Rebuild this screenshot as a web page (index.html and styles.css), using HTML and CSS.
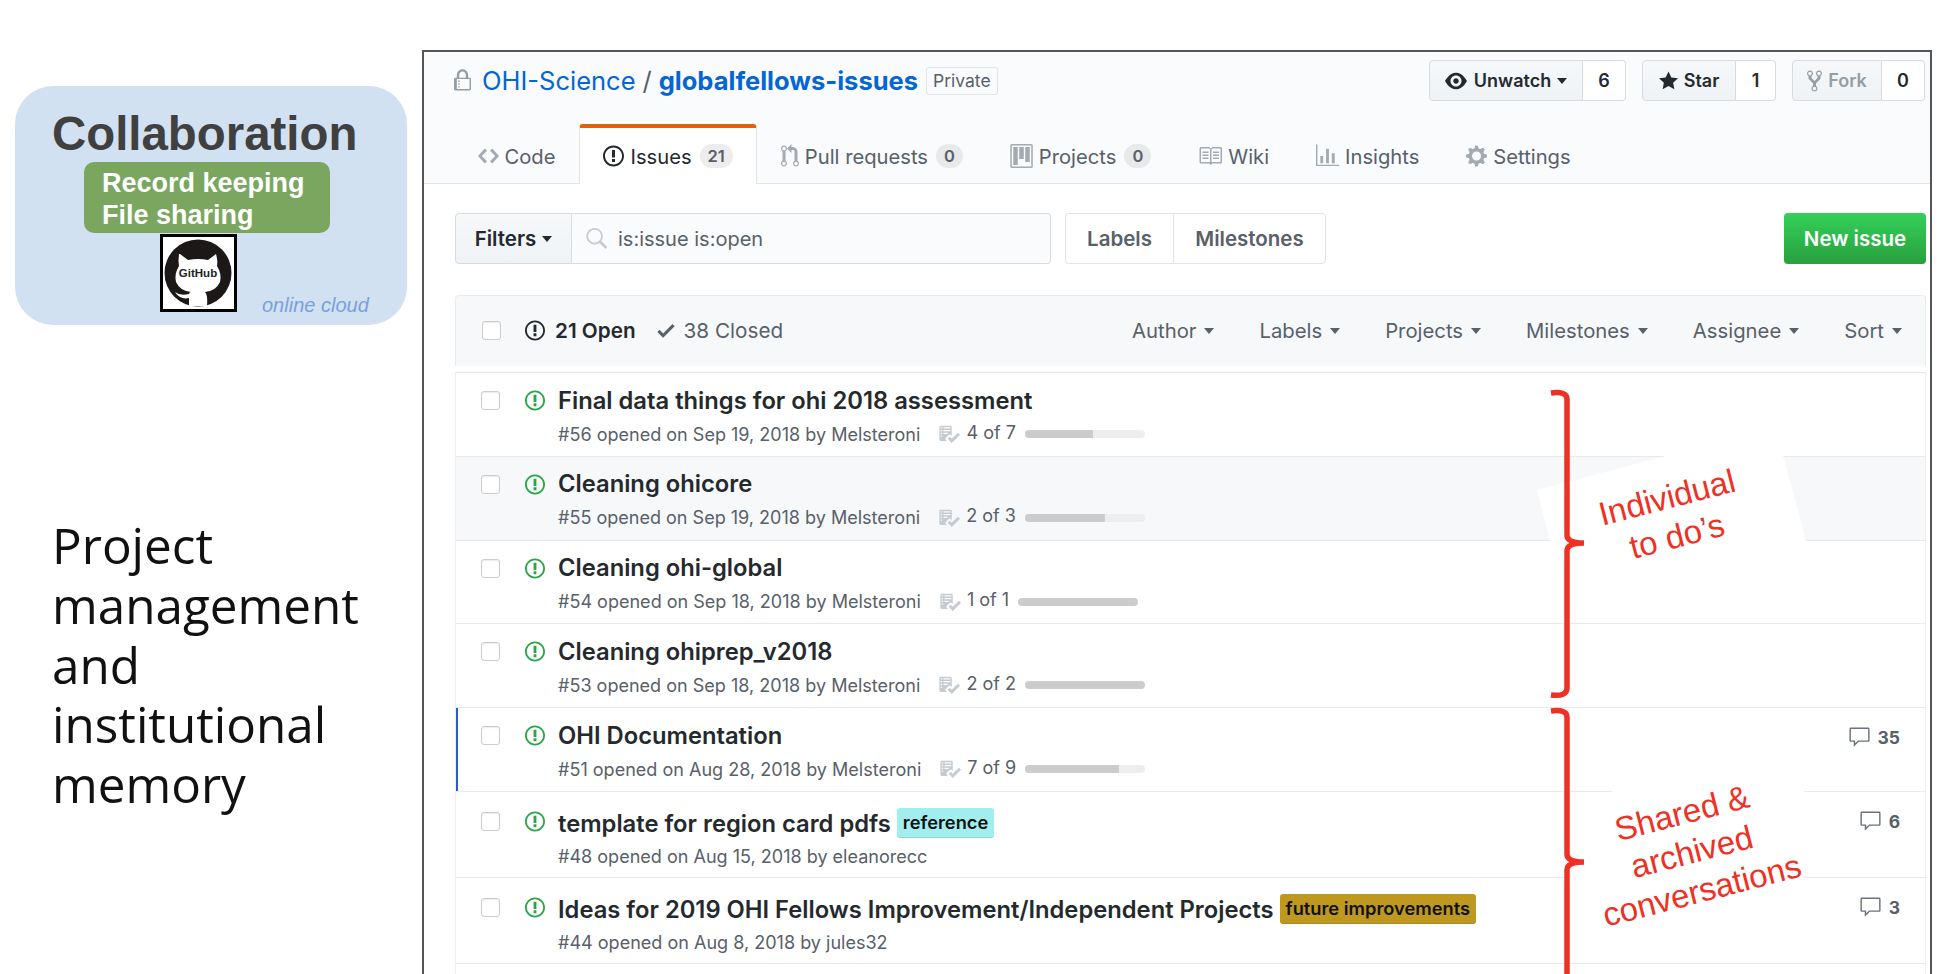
FILE: index.html
```html
<!DOCTYPE html>
<html lang="en">

<head>
  <meta charset="UTF-8">
  <title>Project management and institutional memory</title>
  <link rel="stylesheet" href="styles.css">
</head>

<body>
  <svg class="sprite" width="0" height="0">
    <symbol id="i-issue" viewBox="0 0 14 16"><path d="M7 2.3c3.14 0 5.7 2.56 5.7 5.7s-2.56 5.7-5.7 5.7A5.71 5.71 0 011.3 8c0-3.14 2.56-5.7 5.7-5.7zM7 1C3.14 1 0 4.14 0 8s3.14 7 7 7 7-3.14 7-7-3.14-7-7-7zm1 3H6v5h2V4zm0 6H6v2h2v-2z"/></symbol>
    <symbol id="i-lock" viewBox="0 0 12 16"><path d="M4 13H3v-1h1v1zm8-6v7c0 .55-.45 1-1 1H1c-.55 0-1-.45-1-1V7c0-.55.45-1 1-1h1V4c0-2.2 1.8-4 4-4s4 1.8 4 4v2h1c.55 0 1 .45 1 1zM3.7 6h4.59V4c0-1.27-1.03-2.3-2.3-2.3-1.27 0-2.3 1.03-2.3 2.3v2H3.7zM11 7H2v7h9V7zM4 8H3v1h1V8zm0 2H3v1h1v-1z"/></symbol>
    <symbol id="i-code" viewBox="0 0 14 16"><path d="M9.5 3L8 4.5 11.5 8 8 11.5 9.5 13 14 8 9.5 3zm-5 0L0 8l4.5 5L6 11.5 2.5 8 6 4.5 4.5 3z"/></symbol>
    <symbol id="i-pr" viewBox="0 0 12 16"><path d="M11 11.28V5c-.03-.78-.34-1.47-.94-2.06C9.46 2.35 8.78 2.03 8 2H7V0L4 3l3 3V4h1c.27.02.48.11.69.31.21.2.3.42.31.69v6.28A1.993 1.993 0 0010 15a1.993 1.993 0 001-3.72zm-1 2.92c-.66 0-1.2-.55-1.2-1.2 0-.65.55-1.2 1.2-1.2.65 0 1.2.55 1.2 1.2 0 .65-.55 1.2-1.2 1.2zM4 3c0-1.11-.89-2-2-2a1.993 1.993 0 00-1 3.72v6.56A1.993 1.993 0 002 15a1.993 1.993 0 001-3.72V4.72c.59-.34 1-.98 1-1.72zm-.8 10c0 .66-.55 1.2-1.2 1.2-.65 0-1.2-.55-1.2-1.2 0-.65.55-1.2 1.2-1.2.65 0 1.2.55 1.2 1.2zM2 4.2C1.34 4.2.8 3.65.8 3c0-.65.55-1.2 1.2-1.2.65 0 1.2.55 1.2 1.2 0 .65-.55 1.2-1.2 1.2z"/></symbol>
    <symbol id="i-project" viewBox="0 0 15 16"><path fill-rule="evenodd" d="M10 12h3V2h-3v10zm-4-2h3V2H6v8zm-4 4h3V2H2v12zM14 0H1a1 1 0 00-1 1v14a1 1 0 001 1h13a1 1 0 001-1V1a1 1 0 00-1-1zm0 15H1V1h13v14z"/></symbol>
    <symbol id="i-book" viewBox="0 0 16 16"><path d="M3 5h4v1H3V5zm0 3h4V7H3v1zm0 2h4V9H3v1zm11-5h-4v1h4V5zm0 2h-4v1h4V7zm0 2h-4v1h4V9zm2-6v9c0 .55-.45 1-1 1H9.5l-1 1-1-1H2c-.55 0-1-.45-1-1V3c0-.55.45-1 1-1h5.5l1 1 1-1H15c.55 0 1 .45 1 1zm-8 .5L7.5 3H2v9h6V3.5zm7-.5H9.5l-.5.5V12h6V3z"/></symbol>
    <symbol id="i-graph" viewBox="0 0 16 16"><path d="M16 14v1H0V0h1v14h15zM5 13H3V8h2v5zm4 0H7V3h2v10zm4 0h-2V6h2v7z"/></symbol>
    <symbol id="i-gear" viewBox="0 0 14 16"><path d="M14 8.77v-1.6l-1.94-.64-.45-1.09.88-1.84-1.13-1.13-1.81.91-1.09-.45-.69-1.92h-1.6l-.63 1.94-1.11.45-1.84-.88-1.13 1.13.91 1.81-.45 1.09L0 7.23v1.59l1.94.64.45 1.09-.88 1.84 1.13 1.13 1.81-.91 1.09.45.69 1.92h1.59l.63-1.94 1.11-.45 1.84.88 1.13-1.13-.92-1.81.47-1.09L14 8.75v.02zM7 11c-1.66 0-3-1.34-3-3s1.34-3 3-3 3 1.34 3 3-1.34 3-3 3z"/></symbol>
    <symbol id="i-eye" viewBox="0 0 16 16"><path d="M8.06 2C3 2 0 8 0 8s3 6 8.06 6C13 14 16 8 16 8s-3-6-7.94-6zM8 12c-2.2 0-4-1.78-4-4 0-2.2 1.8-4 4-4 2.22 0 4 1.8 4 4 0 2.22-1.78 4-4 4zm2-4c0 1.11-.89 2-2 2-1.11 0-2-.89-2-2 0-1.11.89-2 2-2 1.11 0 2 .89 2 2z"/></symbol>
    <symbol id="i-star" viewBox="0 0 14 16"><path d="M14 6l-4.9-.64L7 1 4.9 5.36 0 6l3.6 3.26L2.67 14 7 11.67 11.33 14l-.93-4.74L14 6z"/></symbol>
    <symbol id="i-fork" viewBox="0 0 10 16"><path d="M8 1a1.993 1.993 0 00-1 3.72V6L5 8 3 6V4.72A1.993 1.993 0 002 1a1.993 1.993 0 00-1 3.72V6.5l3 3v1.78A1.993 1.993 0 005 15a1.993 1.993 0 001-3.72V9.5l3-3V4.72A1.993 1.993 0 008 1zM2 4.2C1.34 4.2.8 3.65.8 3c0-.65.55-1.2 1.2-1.2.65 0 1.2.55 1.2 1.2 0 .65-.55 1.2-1.2 1.2zm3 10c-.66 0-1.2-.55-1.2-1.2 0-.65.55-1.2 1.2-1.2.65 0 1.2.55 1.2 1.2 0 .65-.55 1.2-1.2 1.2zm3-10c-.66 0-1.2-.55-1.2-1.2 0-.65.55-1.2 1.2-1.2.65 0 1.2.55 1.2 1.2 0 .65-.55 1.2-1.2 1.2z"/></symbol>
    <symbol id="i-search" viewBox="0 0 16 16"><path d="M15.7 13.3l-3.81-3.83A5.93 5.93 0 0013 6c0-3.31-2.69-6-6-6S1 2.69 1 6s2.69 6 6 6c1.3 0 2.48-.41 3.47-1.11l3.83 3.81c.19.2.45.3.7.3.25 0 .52-.09.7-.3a.996.996 0 000-1.41v.01zM7 10.7c-2.59 0-4.7-2.11-4.7-4.7 0-2.59 2.11-4.7 4.7-4.7 2.59 0 4.7 2.11 4.7 4.7 0 2.59-2.11 4.7-4.7 4.7z"/></symbol>
    <symbol id="i-check" viewBox="0 0 12 16"><path d="M12 5l-8 8-4-4 1.5-1.5L4 10l6.5-6.5L12 5z"/></symbol>
    <symbol id="i-checklist" viewBox="0 0 16 16"><path d="M16 8.5l-6 6-3-3L8.5 10l1.5 1.5L14.5 7 16 8.5zM5.7 12.2l.8.8H2c-.55 0-1-.45-1-1V3c0-.55.45-1 1-1h7c.55 0 1 .45 1 1v6.5l-.8-.8c-.39-.39-1.03-.39-1.42 0L5.7 10.8a.996.996 0 000 1.41v-.01zM4 4h5V3H4v1zm0 2h5V5H4v1zm0 2h3V7H4v1zM3 9H2v1h1V9zm0-2H2v1h1V7zm0-2H2v1h1V5zm0-2H2v1h1V3z"/></symbol>
    <symbol id="i-comment" viewBox="0 0 16 16"><path d="M14 1H2c-.55 0-1 .45-1 1v8c0 .55.45 1 1 1h2v3.5L7.5 11H14c.55 0 1-.45 1-1V2c0-.55-.45-1-1-1zm0 9H7l-2 2v-2H2V2h12v8z"/></symbol>
  </svg>

  <div class="slide">
    <aside class="side">
      <section class="cloud">
        <h2 class="cloud-title">Collaboration</h2>
        <div class="cloud-green">Record keeping<br>File sharing</div>
        <div class="cloud-foot">
          <svg class="gh-logo" viewBox="0 0 77 78">
            <rect x="1.5" y="1.5" width="74" height="75" fill="#fff" stroke="#000" stroke-width="3"/>
            <circle cx="38" cy="39" r="33.5" fill="#1b1817"/>
            <path fill="#fff" d="M20 20l8 6q10-2 20 0l8-6q2 7 1 12 5 8 3 16-4 9-15 10 3 3 2 14l-18 0v-8q-9 2-14-6 5 4 14 2 0-2 2-2-11-1-15-10-2-8 3-16-1-5 0-12z"/>
            <text x="38" y="43" class="gh-text" text-anchor="middle">GitHub</text>
          </svg>
          <span class="cloud-note">online cloud</span>
        </div>
      </section>
      <p class="side-text">Project<br>management<br>and<br>institutional<br>memory</p>
    </aside>

    <main class="frame">
      <header class="repo-head">
        <div class="repo-top">
          <h1 class="repo-title">
            <svg class="ico lock"><use href="#i-lock"/></svg>
            <a class="owner">OHI-Science</a>
            <span class="sep">/</span>
            <a class="repo">globalfellows-issues</a>
            <span class="private">Private</span>
          </h1>
          <div class="repo-actions">
            <div class="btn-group watch">
              <span class="btn"><svg class="ico eye"><use href="#i-eye"/></svg>Unwatch<i class="caret"></i></span>
              <span class="count">6</span>
            </div>
            <div class="btn-group star">
              <span class="btn"><svg class="ico star-ico"><use href="#i-star"/></svg>Star</span>
              <span class="count">1</span>
            </div>
            <div class="btn-group fork">
              <span class="btn disabled"><svg class="ico fork-ico"><use href="#i-fork"/></svg>Fork</span>
              <span class="count">0</span>
            </div>
          </div>
        </div>
        <nav class="tabs">
          <a class="tab"><svg class="ico tab-ico code"><use href="#i-code"/></svg>Code</a>
          <a class="tab selected"><svg class="ico tab-ico issue"><use href="#i-issue"/></svg>Issues<span class="counter">21</span></a>
          <a class="tab"><svg class="ico tab-ico pr"><use href="#i-pr"/></svg>Pull requests<span class="counter">0</span></a>
          <a class="tab"><svg class="ico tab-ico project"><use href="#i-project"/></svg>Projects<span class="counter">0</span></a>
          <a class="tab"><svg class="ico tab-ico book"><use href="#i-book"/></svg>Wiki</a>
          <a class="tab"><svg class="ico tab-ico graph"><use href="#i-graph"/></svg>Insights</a>
          <a class="tab"><svg class="ico tab-ico gear"><use href="#i-gear"/></svg>Settings</a>
        </nav>
      </header>

      <div class="issues">
        <div class="toolbar">
          <div class="search-wrap">
            <span class="filters">Filters<i class="caret"></i></span>
            <span class="search"><svg class="ico search-ico"><use href="#i-search"/></svg>is:issue is:open</span>
          </div>
          <div class="nav-links">
            <a class="nav-link labels">Labels</a>
            <a class="nav-link">Milestones</a>
          </div>
          <a class="new-issue">New issue</a>
        </div>

        <div class="list-head">
          <span class="check"></span>
          <span class="state open"><svg class="ico state-ico"><use href="#i-issue"/></svg>21 Open</span>
          <span class="state closed"><svg class="ico check-ico"><use href="#i-check"/></svg>38 Closed</span>
          <div class="list-filters">
            <span>Author<i class="caret"></i></span>
            <span>Labels<i class="caret"></i></span>
            <span>Projects<i class="caret"></i></span>
            <span>Milestones<i class="caret"></i></span>
            <span>Assignee<i class="caret"></i></span>
            <span>Sort<i class="caret"></i></span>
          </div>
        </div>

        <ul class="rows">
          <li class="row">
            <span class="check"></span>
            <svg class="ico row-ico"><use href="#i-issue"/></svg>
            <div class="row-main">
              <div class="row-title">Final data things for ohi 2018 assessment</div>
              <div class="row-meta"><span>#56 opened on Sep 19, 2018 by Melsteroni</span>
                <svg class="ico list-ico"><use href="#i-checklist"/></svg><span class="tasks">4 of 7</span>
                <span class="bar"><span class="fill" style="width:57%"></span></span>
              </div>
            </div>
          </li>
          <li class="row grey">
            <span class="check"></span>
            <svg class="ico row-ico"><use href="#i-issue"/></svg>
            <div class="row-main">
              <div class="row-title">Cleaning ohicore</div>
              <div class="row-meta"><span>#55 opened on Sep 19, 2018 by Melsteroni</span>
                <svg class="ico list-ico"><use href="#i-checklist"/></svg><span class="tasks">2 of 3</span>
                <span class="bar"><span class="fill" style="width:67%"></span></span>
              </div>
            </div>
          </li>
          <li class="row">
            <span class="check"></span>
            <svg class="ico row-ico"><use href="#i-issue"/></svg>
            <div class="row-main">
              <div class="row-title">Cleaning ohi-global</div>
              <div class="row-meta"><span>#54 opened on Sep 18, 2018 by Melsteroni</span>
                <svg class="ico list-ico"><use href="#i-checklist"/></svg><span class="tasks">1 of 1</span>
                <span class="bar"><span class="fill" style="width:100%"></span></span>
              </div>
            </div>
          </li>
          <li class="row">
            <span class="check"></span>
            <svg class="ico row-ico"><use href="#i-issue"/></svg>
            <div class="row-main">
              <div class="row-title">Cleaning ohiprep_v2018</div>
              <div class="row-meta"><span>#53 opened on Sep 18, 2018 by Melsteroni</span>
                <svg class="ico list-ico"><use href="#i-checklist"/></svg><span class="tasks">2 of 2</span>
                <span class="bar"><span class="fill" style="width:100%"></span></span>
              </div>
            </div>
          </li>
          <li class="row marked">
            <span class="check"></span>
            <svg class="ico row-ico"><use href="#i-issue"/></svg>
            <div class="row-main">
              <div class="row-title">OHI Documentation</div>
              <div class="row-meta"><span>#51 opened on Aug 28, 2018 by Melsteroni</span>
                <svg class="ico list-ico"><use href="#i-checklist"/></svg><span class="tasks">7 of 9</span>
                <span class="bar"><span class="fill" style="width:78%"></span></span>
              </div>
            </div>
            <span class="comments"><svg class="ico comment-ico"><use href="#i-comment"/></svg>35</span>
          </li>
          <li class="row labeled">
            <span class="check"></span>
            <svg class="ico row-ico"><use href="#i-issue"/></svg>
            <div class="row-main">
              <div class="row-title">template for region card pdfs<span class="label ref">reference</span></div>
              <div class="row-meta"><span>#48 opened on Aug 15, 2018 by eleanorecc</span></div>
            </div>
            <span class="comments"><svg class="ico comment-ico"><use href="#i-comment"/></svg>6</span>
          </li>
          <li class="row labeled">
            <span class="check"></span>
            <svg class="ico row-ico"><use href="#i-issue"/></svg>
            <div class="row-main">
              <div class="row-title">Ideas for 2019 OHI Fellows Improvement/Independent Projects<span class="label future">future improvements</span></div>
              <div class="row-meta"><span>#44 opened on Aug 8, 2018 by jules32</span></div>
            </div>
            <span class="comments"><svg class="ico comment-ico"><use href="#i-comment"/></svg>3</span>
          </li>
          <li class="row"></li>
        </ul>
      </div>
    </main>

    <!-- hand drawn notes lying over the screenshot -->
    <svg class="marks" viewBox="0 0 1946 974">
      <polygon class="patch" points="1537,490 1550,541 1806,541 1783,455 1670,455"/>
      <polygon class="patch" points="1613,789 1804,789 1804,879 1570,879"/>
      <path class="brace" d="M1551 393q16-2 16 6v136q0 8 17 8-17 0-17 8v137q0 9-16 7"/>
      <path class="brace" d="M1551 711q16-2 16 6v137q0 8 17 8-17 0-17 8v110"/>
    </svg>
    <div class="note note-one">Individual<br>to do’s</div>
    <div class="note note-two">Shared &amp;<br>archived<br>conversations</div>
  </div>
</body>

</html>
```

FILE: styles.css
```css
* {
  box-sizing: border-box;
}

html,
body {
  margin: 0;
  height: 100%;
  overflow: hidden;
  background: #fff;
}

body {
  font-family: Inter, "Liberation Sans", sans-serif;
  color: #24292e;
}

.sprite {
  position: absolute;
}

.ico {
  display: inline-block;
  fill: currentColor;
  flex: none;
}

.slide {
  display: flex;
  height: 974px;
  position: relative;
  width: 1946px;
}

/* left column */
.side {
  flex: none;
  padding: 86px 0 0 15px;
  width: 422px;
}

.cloud {
  background: #d2e1f1;
  border-radius: 38px;
  font-family: "Liberation Sans", sans-serif;
  height: 239px;
  padding-top: 23px;
  width: 392px;
}

.cloud-title {
  color: #404040;
  font-size: 47.4px;
  font-weight: 700;
  line-height: 50px;
  margin: 0 0 0 37px;
}

.cloud-green {
  background: #7aa65f;
  border-radius: 10px;
  color: #fff;
  font-size: 27px;
  font-weight: 700;
  height: 71px;
  line-height: 32px;
  margin: 3px 0 1px 69px;
  padding: 5px 0 0 18px;
  width: 246px;
}

.cloud-foot {
  display: flex;
}

.gh-logo {
  height: 78px;
  margin-left: 145px;
  width: 77px;
}

.gh-text {
  fill: #222;
  font-family: "Liberation Sans", sans-serif;
  font-size: 11.5px;
  font-weight: 700;
}

.cloud-note {
  color: #7a9fe0;
  font-size: 20px;
  font-style: italic;
  margin: 60px 0 0 25px;
}

.side-text {
  color: #111;
  font-family: "Open Sans", sans-serif;
  font-size: 49.4px;
  line-height: 59.8px;
  margin: 190px 0 0 37px;
}

/* github page */
.frame {
  border: 2px solid #555;
  border-bottom: 0;
  flex: none;
  height: 924px;
  margin-top: 50px;
  overflow: hidden;
  width: 1510px;
}

.repo-head {
  background: #fafbfc;
  border-bottom: 1px solid #e1e4e8;
  height: 132px;
}

.repo-top {
  display: flex;
  height: 72px;
  justify-content: space-between;
  padding: 8px 5px 0 30px;
}

.repo-title {
  align-items: center;
  display: flex;
  font-size: 25.5px;
  font-weight: 400;
  height: 40px;
  margin: 0;
}

.lock {
  color: #959da5;
  height: 23px;
  margin-right: 11px;
  width: 17px;
}

.owner,
.repo {
  color: #0366d6;
}

.repo {
  font-weight: 700;
}

.sep {
  color: #586069;
  margin: 0 7px;
}

.private {
  border: 1px solid #e1e4e8;
  border-radius: 3px;
  color: #586069;
  font-size: 17.5px;
  height: 28px;
  line-height: 26px;
  margin: 2px 0 0 8px;
  padding: 0 6px;
}

.repo-actions {
  display: flex;
  gap: 16px;
}

.btn-group {
  display: flex;
  font-size: 18px;
  font-weight: 600;
  height: 41px;
}

.btn {
  align-items: center;
  background: linear-gradient(#f6f8fa, #eff3f6);
  border: 1px solid #d8dbe0;
  border-radius: 4px 0 0 4px;
  display: flex;
  justify-content: center;
}

.btn.disabled {
  color: #959da5;
}

.count {
  align-items: center;
  background: #fff;
  border: 1px solid #d8dbe0;
  border-left: 0;
  border-radius: 0 4px 4px 0;
  display: flex;
  justify-content: center;
}

.watch .btn { width: 154px; }
.watch .count { width: 43px; }
.star .btn { width: 94px; }
.star .count { width: 40px; }
.fork .btn { width: 90px; }
.fork .count { width: 43px; }

.eye {
  height: 22px;
  margin-right: 7px;
  width: 22px;
}

.star-ico {
  height: 22px;
  margin-right: 6px;
  width: 19px;
}

.fork-ico {
  height: 24px;
  margin-right: 6px;
  width: 15px;
}

.caret {
  border-left: 5px solid transparent;
  border-right: 5px solid transparent;
  border-top: 6px solid currentColor;
  display: inline-block;
  height: 0;
  margin-left: 6px;
  width: 0;
}

.tabs {
  display: flex;
  font-size: 20.2px;
  height: 60px;
  padding-left: 30px;
}

.tab {
  align-items: center;
  color: #586069;
  display: flex;
  height: 60px;
  padding: 4px 23.5px 0;
}

.tab.selected {
  background: #fff;
  border-left: 1px solid #e1e4e8;
  border-right: 1px solid #e1e4e8;
  border-top: 4px solid #e36209;
  border-radius: 4px 4px 0 0;
  color: #24292e;
  height: 60px;
  padding-top: 0;
}

.tab-ico {
  color: #a3aab1;
  height: 24px;
  margin-right: 6px;
  width: 21px;
}

.selected .tab-ico {
  color: #24292e;
}

.tab-ico.pr { width: 18px; }
.tab-ico.project { width: 23px; }
.tab-ico.book { width: 24px; }
.tab-ico.graph { width: 23px; }

.counter {
  background: rgba(27, 31, 35, .08);
  border-radius: 12px;
  color: #586069;
  font-size: 16.5px;
  font-weight: 600;
  height: 24px;
  line-height: 24px;
  margin-left: 8px;
  padding: 0 8px;
}

.issues {
  padding: 0 4px 0 31px;
}

.toolbar {
  display: flex;
  height: 51px;
  margin-top: 29px;
}

.search-wrap {
  display: flex;
  width: 596px;
}

.filters {
  align-items: center;
  background: linear-gradient(#f6f8fa, #eff3f6);
  border: 1px solid #d8dbe0;
  border-radius: 4px 0 0 4px;
  display: flex;
  font-size: 20.5px;
  font-weight: 600;
  justify-content: center;
  width: 117px;
}

.search {
  align-items: center;
  background: #fafbfc;
  border: 1px solid #d8dbe0;
  border-left: 0;
  border-radius: 0 4px 4px 0;
  color: #586069;
  display: flex;
  flex: 1;
  font-size: 20px;
  padding-left: 13px;
}

.search-ico {
  color: #c6cbd1;
  height: 24px;
  margin-right: 11px;
  width: 22px;
}

.nav-links {
  display: flex;
  margin-left: 14px;
}

.nav-link {
  align-items: center;
  border: 1px solid #e1e4e8;
  border-radius: 0 4px 4px 0;
  color: #586069;
  display: flex;
  font-size: 20.5px;
  font-weight: 600;
  justify-content: center;
  width: 153px;
}

.nav-link.labels {
  border-radius: 4px 0 0 4px;
  border-right: 0;
  width: 108px;
}

.new-issue {
  align-items: center;
  background: linear-gradient(#34d058, #28a03f);
  border-radius: 4px;
  color: #fff;
  display: flex;
  font-size: 20.5px;
  font-weight: 600;
  justify-content: center;
  margin-left: auto;
  width: 142px;
}

.list-head {
  align-items: center;
  background: #f6f8fa;
  border: 1px solid #e9ecef;
  border-bottom: 0;
  border-radius: 4px 4px 0 0;
  display: flex;
  font-size: 20.7px;
  height: 71px;
  margin-top: 31px;
  padding: 0 23px 1px 26px;
}

.check {
  background: #fff;
  border: 1px solid #ccc;
  border-radius: 3px;
  box-shadow: inset 0 1px 1px rgba(0, 0, 0, .08);
  flex: none;
  height: 19px;
  width: 19px;
}

.state {
  align-items: center;
  color: #586069;
  display: flex;
}

.state.open {
  color: #24292e;
  font-weight: 600;
  margin-left: 24px;
}

.state.closed {
  margin-left: 21px;
}

.state-ico {
  height: 23px;
  margin-right: 10px;
  width: 20px;
}

.check-ico {
  height: 23px;
  margin-right: 9px;
  width: 18px;
}

.list-filters {
  color: #586069;
  display: flex;
  font-size: 20.3px;
  gap: 45px;
  margin-left: auto;
}

.list-filters span {
  align-items: center;
  display: flex;
}

.list-filters .caret {
  margin-left: 8px;
}

.rows {
  border-left: 1px solid #eee;
  border-right: 1px solid #eee;
  border-top: 1px solid #e1e4e8;
  list-style: none;
  margin: 6px 0 0;
  padding: 0;
}

.row {
  border-bottom: 1px solid #e8eaed;
  display: flex;
  height: 83.8px;
  padding-left: 25px;
}

.row.grey {
  background: #f6f8fa;
}

.row.marked {
  box-shadow: inset 2px 0 0 #2a5bc8;
}

.row.labeled {
  height: 86px;
  padding-top: 2px;
}

.row .check {
  margin-top: 18px;
}

.row-ico {
  color: #28a745;
  height: 23px;
  margin: 16px 0 0 25px;
  width: 20px;
}

.row-main {
  margin-left: 13px;
}

.row-title {
  align-items: center;
  color: #24292e;
  display: flex;
  font-size: 23.75px;
  font-weight: 600;
  height: 34px;
  margin-top: 10px;
  white-space: nowrap;
}

.labeled .row-title {
  margin-top: 13px;
}

.row-meta {
  align-items: center;
  color: #586069;
  display: flex;
  font-size: 18.05px;
  height: 24px;
  margin-top: 5px;
  white-space: nowrap;
}

.labeled .row-meta {
  margin-top: 4px;
}

.list-ico {
  color: #c6cbd1;
  height: 22px;
  margin-left: 18px;
  width: 22px;
}

.tasks {
  margin: -4px 0 0 6px;
}

.bar {
  background: #eee;
  border-radius: 4px;
  display: block;
  height: 8px;
  margin-left: 9px;
  overflow: hidden;
  width: 120px;
}

.fill {
  background: #ccc;
  display: block;
  height: 100%;
}

.label {
  border-radius: 3px;
  box-shadow: inset 0 -1px 0 rgba(27, 31, 35, .12);
  color: #111;
  font-size: 18.3px;
  font-weight: 600;
  height: 30px;
  line-height: 28px;
  margin: -2px 0 0 6px;
  padding: 0 6px;
}

.label.ref {
  background: #a2eeef;
}

.label.future {
  background: #bf9820;
}

.comments {
  align-items: center;
  color: #586069;
  display: flex;
  font-size: 17.5px;
  font-weight: 700;
  height: 24px;
  margin: 17px 25px 0 auto;
}

.labeled .comments {
  margin-top: 16px;
}

.comment-ico {
  color: #6a737d;
  height: 23px;
  margin-right: 7px;
  width: 23px;
}

/* annotations */
.marks {
  height: 974px;
  left: 0;
  pointer-events: none;
  position: absolute;
  top: 0;
  width: 1946px;
}

.patch {
  fill: #fff;
}

.brace {
  fill: none;
  stroke: #ee3124;
  stroke-width: 5.5;
}

.note {
  color: #ee3124;
  font-family: "Liberation Sans", sans-serif;
  font-size: 33px;
  line-height: 40px;
  position: absolute;
  text-align: center;
  transform: rotate(-14.5deg);
  white-space: nowrap;
  width: 260px;
}

.note-one {
  left: 1542px;
  top: 477px;
}

.note-two {
  left: 1562px;
  top: 792px;
}
```
